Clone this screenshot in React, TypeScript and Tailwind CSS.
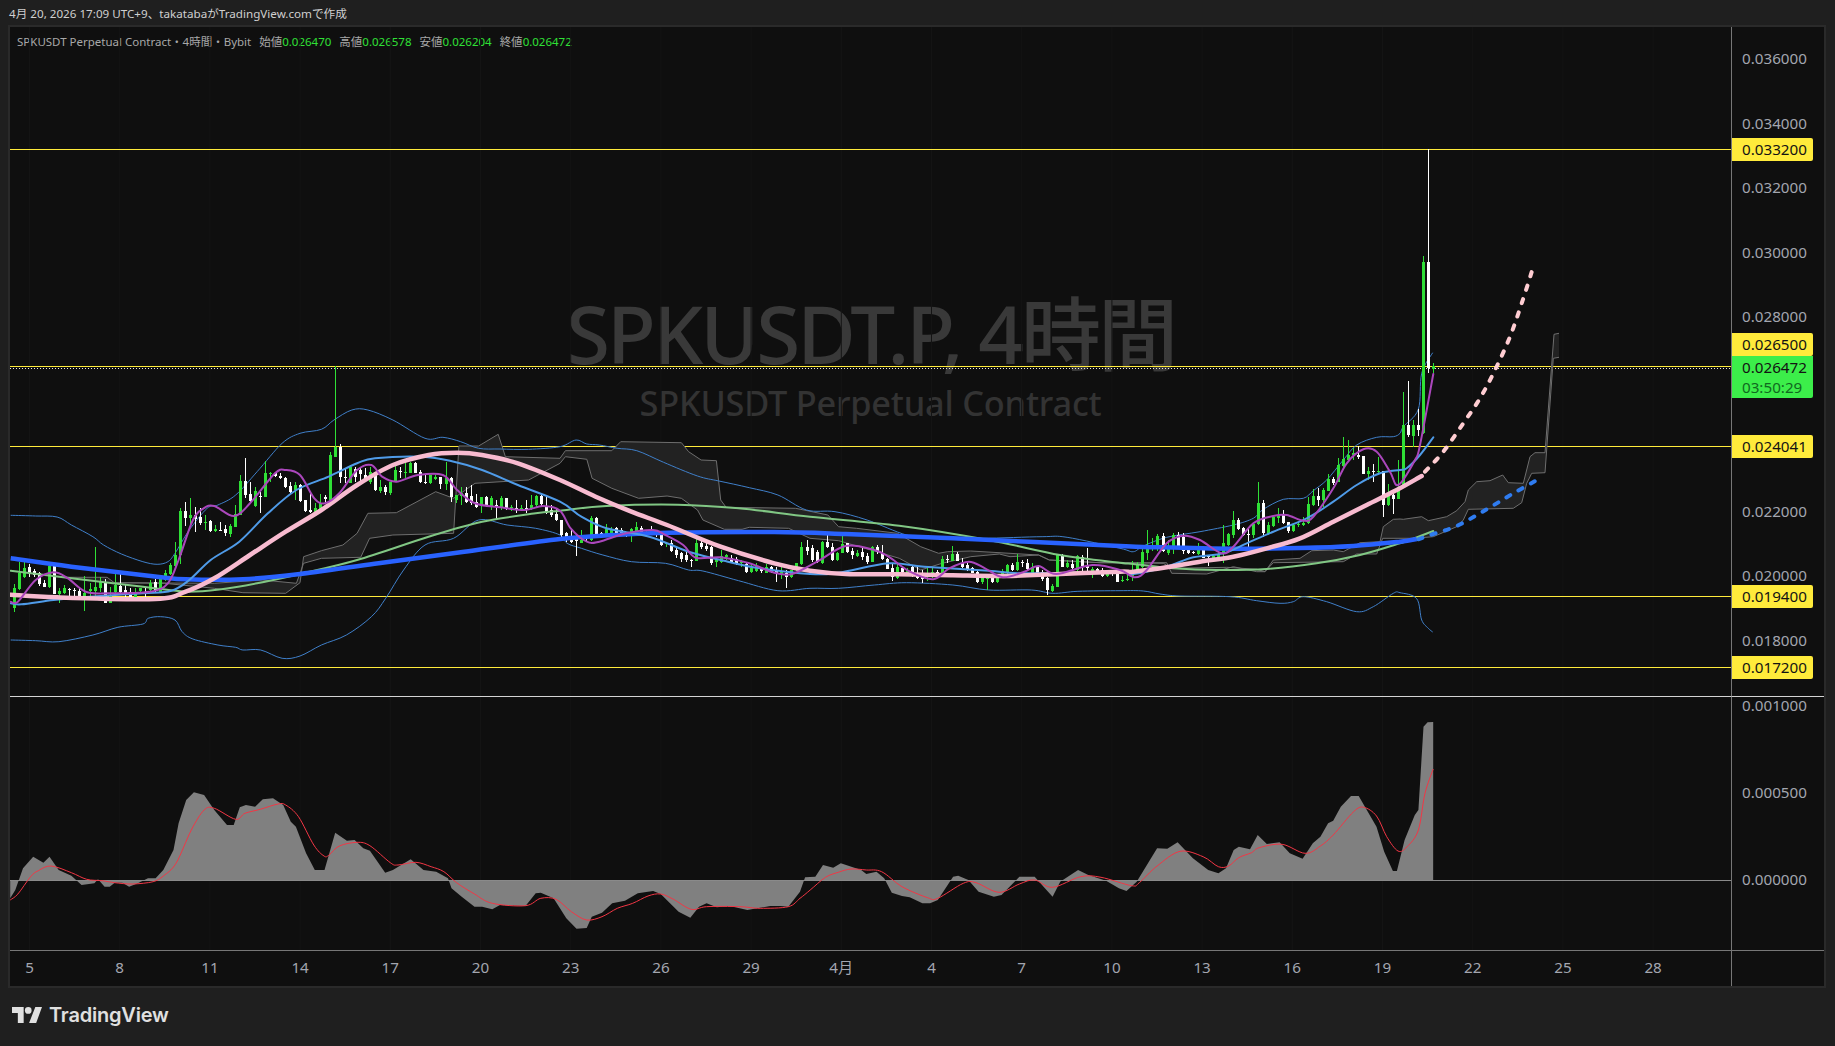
type Pt = [number, number]

const conv = (ox: number, sx: number, oy: number) => (flat: number[]): Pt[] => {
  const out: Pt[] = []
  for (let i = 0; i < flat.length; i += 2) out.push([ox + flat[i] / sx, oy + flat[i + 1] / 3])
  return out
}
const z4 = conv(0, 2.8, 420)
const z6 = conv(560, 2.8, 420)
const z9 = conv(1100, 3, 420)
const z5 = conv(1300, 3, 140)
const z7 = conv(0, 1.96, 690)
const z8 = conv(800, 1.96, 690)

// pieces overlap in x, keep only what moves right of the previous piece
const join = (...parts: Pt[][]): Pt[] => {
  const out: Pt[] = []
  parts.forEach((part) =>
    part.forEach((p) => {
      if (!out.length || p[0] > out[out.length - 1][0] + 0.3) out.push(p)
    }),
  )
  return out
}

const straight = (pts: Pt[]) => pts.map((p, i) => `${i ? 'L' : 'M'}${p[0].toFixed(1)} ${p[1].toFixed(1)}`).join('')

const smooth = (pts: Pt[]) => {
  let d = `M${pts[0][0].toFixed(1)} ${pts[0][1].toFixed(1)}`
  for (let i = 0; i < pts.length - 1; i++) {
    const a = pts[Math.max(i - 1, 0)]
    const b = pts[i]
    const c = pts[i + 1]
    const e = pts[Math.min(i + 2, pts.length - 1)]
    const c1x = b[0] + (c[0] - a[0]) / 6
    const c1y = b[1] + (c[1] - a[1]) / 6
    const c2x = c[0] - (e[0] - b[0]) / 6
    const c2y = c[1] - (e[1] - b[1]) / 6
    d += `C${c1x.toFixed(1)} ${c1y.toFixed(1)} ${c2x.toFixed(1)} ${c2y.toFixed(1)} ${c[0].toFixed(1)} ${c[1].toFixed(1)}`
  }
  return d
}

const bbUpper = join(
  z4([30,286,100,288,160,291,200,315,260,350,290,375,340,402,400,425,440,433,470,425,490,400,530,330,580,265,610,255,660,225,720,155,790,70,840,40,900,28,935,0,985,-30,1030,-30,1100,0,1190,55,1240,52,1290,65,1340,85,1400,87,1480,88,1568,80]),
  z6([0,78,45,60,75,72,110,75,160,85,215,92,290,127,385,168,445,183,530,203,610,225,690,270,770,275,860,300,970,345,1040,352,1180,355,1350,350,1420,352,1568,385]),
  z9([100,395,130,378,200,352,300,335,400,315,460,295,490,268,550,238,610,235,640,212,680,180,730,120,770,75,830,52,880,50,900,40]),
  z5([175,915,235,890,290,888,310,860,355,808,365,700,398,638]),
)
const bbLower = join(
  z4([30,660,100,662,165,665,260,645,330,622,400,612,415,595,450,590,490,600,510,635,540,657,610,675,660,682,680,690,730,690,790,715,840,708,900,675,970,645,1040,590,1080,535,1130,450,1190,375,1270,355,1340,300,1420,315,1500,325,1568,345]),
  z6([20,370,60,385,120,405,200,425,295,430,360,450,400,453,500,482,610,512,700,505,780,505,880,495,970,488,1100,495,1200,510,1320,510,1380,520,1450,514,1568,512]),
  z9([130,513,180,522,240,528,390,530,470,542,540,550,580,545,610,530,680,545,770,575,820,560,880,520,900,518]),
  z5([210,1395,290,1358,350,1376,365,1440,385,1465,398,1476]),
)
const maBlue = join(
  z4([30,415,200,440,440,470,520,478,680,478,840,462,1060,430,1300,395,1568,357]),
  z6([150,345,300,338,600,336,800,342,1100,355,1568,378]),
  z9([180,382,400,386,600,384,760,378,900,365]),
  z5([350,1197]),
)
const blueDash = z5([355,1198,400,1182,470,1158,560,1108,640,1060,720,1015])
const maPink = join(
  z4([30,524,160,532,435,537,520,515,600,475,700,405,800,335,900,270,1000,195,1100,135,1200,105,1280,98,1350,105,1450,130,1568,180]),
  z6([100,230,200,275,300,315,450,380,600,430,700,452,800,462,950,463,1100,466,1250,468,1400,462,1568,455]),
  z9([100,455,200,442,300,425,400,410,500,385,600,355,700,305,800,255,890,210]),
  z5([365,1008]),
)
const pinkDash = z5([375,995,430,935,490,850,540,775,585,690,630,590,665,490,700,380])
const maGreen = join(
  z4([30,452,200,475,400,500,520,515,620,508,720,490,840,462,1000,420,1200,350,1350,305,1500,280,1568,272]),
  z6([130,258,330,254,500,265,700,290,950,317,1200,360,1400,405,1568,428]),
  z9([100,432,220,445,350,450,500,447,650,430,780,405,900,370]),
  z5([330,1200,400,1173]),
)
const maLight = join(
  z4([30,550,60,553,150,540,250,530,400,520,480,512,530,480,590,420,670,365,750,280,830,210,920,170,1000,130,1050,115,1180,110,1260,122,1350,150,1450,195,1568,245]),
  z6([60,290,130,325,250,350,360,395,470,425,560,445,700,462,780,458,920,430,1020,440,1200,452,1300,460,1568,455]),
  z9([100,462,200,440,280,412,370,400,440,370,520,335,620,295,700,245,770,195,840,160,900,150]),
  z5([320,985,360,945,400,892]),
)
const maPurple = join(
  z4([30,545,50,545,100,480,150,457,190,475,240,515,300,520,420,515,470,490,500,420,540,300,570,265,600,258,655,288,700,250,770,160,800,150,840,165,880,235,910,250,950,220,1000,150,1040,135,1070,170,1110,185,1170,165,1240,165,1280,210,1330,250,1400,262,1470,270,1520,258,1568,272]),
  z6([30,325,75,365,110,365,185,340,260,330,295,345,345,375,380,413,450,412,530,430,600,458,650,462,720,425,800,378,880,390,920,410,980,455,1045,478,1090,445,1145,425,1190,445,1240,472,1300,455,1340,438,1390,462,1490,435,1568,450]),
  z9([105,472,140,450,200,370,250,347,300,360,365,400,400,380,460,310,520,288,560,285,610,302,640,290,700,205,740,130,790,88,830,95,870,155,895,195]),
  z5([345,960,360,915,400,702]),
)
const cloudA = join(
  z4([180,472,300,472,320,488,600,490,735,480,830,490,850,430,900,415,1010,412,1035,355,1100,345,1270,340,1285,78,1340,78,1395,43,1415,110,1568,115]),
  z6([15,92,145,92,170,65,340,68,360,95,395,120,438,122,450,240,465,262,660,265,750,285,780,320,830,325,945,340,1010,380,1060,400,1085,395,1150,393,1340,405,1370,420,1512,428]),
  z9([190,430,215,445,380,442,470,448,495,455,520,428,730,425,770,402,830,402,848,355,900,355]),
  z5([340,1195,400,1190,470,1160,490,1140,505,1108,640,1105,665,1088,680,1030,695,1000,735,998,760,655,777,652]),
)
const cloudB = join(
  z4([320,488,460,490,600,505,680,518,800,520,840,488,850,410,900,392,960,375,1000,340,1030,280,1110,278,1220,215,1270,235,1330,190,1480,180,1568,130]),
  z6([15,110,75,118,90,175,145,205,220,235,300,228,340,235,385,270,400,300,460,328,510,328,530,322,640,325,700,355,780,362,950,415,1010,450,1070,430,1150,410,1230,402,1260,410,1340,405,1370,420,1512,428]),
  z9([200,428,215,460,320,462,400,440,470,455,495,455,520,420,600,415,635,392,700,390,730,395,780,368,840,365,850,320,880,298,900,297]),
  z5([310,1138,365,1130,385,1142,440,1130,470,1112,495,1085,505,1050,530,1025,570,1022,608,1005,625,1028,670,1030,690,950,705,938,735,938,762,583,777,580]),
)
const hist = join(
  z7([20,625,30,600,45,535,65,500,85,518,97,500,115,540,140,557,160,585,185,580,192,568,205,590,215,590,225,578,240,578,253,590,270,580,290,565,305,565,320,540,340,480,350,400,365,330,380,307,400,315,420,360,445,405,458,405,470,352,482,345,500,350,515,328,535,325,555,345,570,395,580,410,600,490,617,540,636,540,657,428,680,452,695,450,712,475,725,482,755,548,770,540,805,508,830,540,855,545,878,565,885,595,905,620,930,650,945,650,965,658,980,645,1030,648,1050,610,1060,608,1085,625,1110,685,1130,716,1150,714,1160,680,1180,668,1200,640,1225,632,1250,610,1280,603,1295,612,1330,665,1353,683,1370,650,1385,640,1405,652,1430,648,1465,660,1510,648,1530,648,1545,650,1568,605]),
  z8([10,562,30,560,45,525,65,533,80,520,120,540,130,552,150,545,165,565,180,608,200,618,215,622,240,640,255,640,270,630,300,560,310,557,330,570,350,605,380,620,395,615,430,560,460,560,480,595,495,620,510,575,545,540,565,555,600,572,625,595,640,603,660,575,680,525,700,475,720,476,740,457,770,505,800,540,820,550,835,535,850,480,860,470,882,478,897,435,915,462,940,457,960,490,985,506,1005,460,1020,440,1035,400,1045,392,1060,350,1080,318,1095,318,1130,410,1145,485,1162,543,1170,543,1185,450,1205,375,1212,360,1222,110,1230,97,1241,96]),
)
const signal = join(
  z7([20,630,35,612,60,560,75,542,100,528,140,548,170,568,200,572,225,578,260,582,300,575,320,558,345,520,375,420,400,360,420,355,462,388,480,370,510,358,545,342,560,345,585,380,615,465,635,498,645,495,665,468,700,457,725,467,765,518,780,525,815,517,845,530,870,545,895,578,930,612,965,640,1030,647,1060,625,1090,628,1120,665,1150,690,1180,680,1210,655,1240,640,1270,618,1295,612,1320,628,1355,658,1385,650,1450,650,1490,655,1545,650,1568,625]),
  z8([20,600,50,562,75,547,100,537,130,540,160,545,200,590,250,623,270,625,320,580,345,578,390,607,430,582,460,570,495,592,550,560,590,562,650,587,665,578,700,528,745,484,790,500,820,530,840,528,860,503,885,488,900,473,945,463,990,490,1020,468,1045,435,1085,365,1105,352,1130,378,1150,440,1172,483,1190,470,1212,420,1225,310,1241,237]),
)

// 1 = green, 0 = white; high, body top, body bottom, low as 420 + n / 3
const candles: number[][] = [
  [1,492,505,565,575],[1,425,460,507,510],[1,420,443,470,475],[0,432,441,458,470],[0,448,454,466,472],[0,455,460,492,498],[0,480,490,500,502],[1,435,438,500,505],[0,438,438,522,522],[1,505,514,522,548],
  [1,495,505,518,522],[0,505,508,510,528],[0,505,510,512,528],[0,505,512,532,540],[1,468,518,535,572],[1,490,507,514,540],[1,380,502,512,540],[1,470,485,505,515],[0,478,490,548,550],[1,500,525,548,550],
  [1,453,495,515,525],[0,463,497,515,520],[0,495,510,520,530],[0,505,515,538,540],[1,505,518,538,538],[1,505,505,512,520],[0,505,515,520,535],[1,480,488,510,520],[0,478,485,512,520],[1,465,478,518,520],
  [1,450,458,480,482],[1,430,434,462,465],[1,365,405,438,440],[1,265,272,405,432],[0,245,272,295,318],[1,235,285,295,320],[0,262,285,298,335],[0,265,292,310,315],[1,285,305,308,330],[0,300,302,332,335],
  [1,315,328,332,335],[0,305,330,331,332],[0,315,328,340,348],[1,312,318,342,350],[1,255,283,320,322],[1,165,183,285,285],[0,113,183,225,235],[0,185,222,242,245],[1,200,213,258,260],[0,215,228,230,278],
  [1,123,160,230,232],[1,155,158,160,185],[0,155,158,168,172],[0,160,168,175,178],[0,172,175,200,205],[0,185,198,215,222],[1,185,195,210,240],[0,192,195,243,245],[0,240,240,272,275],[0,220,270,275,280],
  [1,250,265,275,288],[1,222,248,272,272],[0,225,232,236,245],[1,95,105,240,242],[1,-162,82,110,112],[0,72,80,170,190],[0,143,170,172,188],[1,138,142,190,190],[0,140,148,172,185],[0,145,150,162,185],
  [0,145,165,182,185],[1,140,155,185,192],[0,155,155,210,212],[1,180,202,212,218],[0,195,202,216,225],[1,185,187,218,225],[1,130,150,185,187],[0,140,153,155,175],[1,130,155,157,175],[1,125,130,158,160],
  [0,125,130,158,160],[0,150,155,187,190],[0,165,185,188,192],[1,165,165,190,192],[1,165,170,178,180],[0,170,172,192,208],[1,125,175,192,210],[0,170,175,232,245],[1,225,225,240,250],[1,200,218,228,255],
  [0,200,220,245,250],[0,195,228,248,255],[0,222,245,260,265],[1,230,232,258,278],[0,228,230,255,260],[1,228,235,258,270],[0,240,255,260,298],[1,228,235,262,270],[0,235,235,268,270],[1,255,262,265,272],
  [0,240,265,270,280],[1,255,265,270,272],[0,240,265,270,278],[1,225,255,268,270],[1,225,228,255,260],[0,222,228,252,258],[0,230,258,278,282],[0,255,270,285,290],[0,265,282,300,302],[0,300,300,345,350],
  [0,335,340,356,365],[0,330,350,365,370],[0,345,352,362,408],[1,330,360,368,370],[0,345,350,358,365],[1,288,295,360,362],[0,292,295,342,345],[0,335,340,350,352],[1,312,328,348,350],[1,322,326,345,348],
  [0,322,325,340,345],[0,325,330,340,345],[0,335,342,348,350],[1,325,328,345,365],[1,305,322,332,335],[0,318,325,338,340],[1,330,335,340,352],[0,318,332,338,340],[0,330,335,345,350],[0,335,342,375,378],
  [1,365,368,372,382],[0,360,368,392,395],[0,385,390,405,415],[0,395,400,418,425],[0,395,405,420,425],[0,418,420,423,440],[1,358,368,422,424],[0,360,368,382,388],[0,370,378,388,392],[0,378,382,428,435],
  [1,415,418,425,442],[1,390,408,425,428],[1,402,405,412,420],[0,405,415,425,428],[0,412,418,428,435],[1,420,424,430,440],[0,425,432,455,458],[1,435,445,455,458],[1,428,438,452,455],[0,440,445,452,458],
  [1,432,440,458,460],[0,438,440,455,458],[0,440,450,462,485],[1,442,455,465,478],[0,450,458,472,503],[1,450,450,472,475],[1,428,430,450,452],[1,365,380,432,434],[0,360,380,392,405],[0,375,385,420,425],
  [0,390,395,425,430],[1,362,365,430,432],[0,345,365,382,385],[0,370,380,420,422],[1,395,398,420,422],[1,348,372,398,400],[0,368,370,396,400],[0,385,392,405,418],[1,390,398,408,412],[0,385,395,412,420],
  [0,400,408,425,432],[1,378,380,425,427],[0,375,380,395,402],[0,375,400,418,420],[0,415,416,446,448],[0,432,445,472,483],[1,432,442,474,476],[0,438,445,455,458],[1,445,450,460,462],[0,435,442,455,470],
  [0,440,460,474,476],[0,450,470,478,488],[1,445,458,472,484],[1,445,455,472,474],[0,450,456,460,475],[1,408,418,462,465],[0,405,418,420,430],[1,378,402,422,424],[0,395,402,422,424],[0,415,430,442,445],
  [0,430,436,450,452],[0,440,445,458,460],[0,450,455,486,488],[1,462,473,486,492],[1,465,468,478,510],[0,463,466,486,488],[1,470,474,486,490],[1,448,452,470,472],[1,432,435,458,462],[0,428,434,450,452],
  [1,403,425,450,452],[0,420,425,428,442],[0,418,428,448,452],[1,428,440,458,460],[0,440,442,462,466],[0,450,456,478,482],[0,470,474,510,525],[1,492,498,512,515],[1,402,405,500,502],[0,402,405,440,442],
  [1,420,430,442,445],[0,420,432,445,448],[1,405,408,450,452],[0,405,410,438,458],[0,385,438,445,458],[1,440,448,458,475],[0,445,448,452,460],[0,445,450,468,470],[1,450,452,468,470],[0,450,452,462,468],
  [0,455,460,485,487],[1,468,480,482,486],[1,462,476,478,482],[1,424,450,468,482],[1,425,435,453,455],[1,375,396,442,445],[1,330,384,398,420],[1,355,380,385,392],[1,342,348,388,392],[0,340,348,392,395],
  [1,360,382,398,405],[1,338,346,385,402],[0,335,345,378,378],[0,340,352,392,402],[0,383,390,398,402],[0,392,395,398,402],[1,370,384,402,404],[0,384,384,413,415],[0,405,408,410,438],[1,405,408,415,418],
  [1,395,402,412,418],[1,316,370,398,428],[1,340,342,375,378],[1,274,300,345,354],[0,295,300,326,330],[0,320,323,345,348],[0,325,342,345,384],[1,310,312,345,355],[1,186,250,312,315],[0,240,250,340,352],
  [1,305,316,342,345],[1,285,292,318,320],[1,265,285,295,310],[0,270,285,310,312],[0,305,306,332,338],[1,312,316,332,335],[1,306,312,316,320],[1,292,308,314,318],[1,232,252,310,312],[1,208,228,256,258],
  [0,205,228,240,258],[1,205,210,240,260],[1,162,176,212,214],[0,170,176,190,195],[1,115,136,185,186],[1,52,118,138,140],[1,60,105,120,125],[1,85,100,105,120],[0,78,104,110,118],[0,108,108,162,162],
  [1,140,154,162,180],[0,132,154,156,185],[1,110,154,156,165],[0,153,153,255,290],[1,192,224,255,258],[0,222,225,236,282],[1,120,200,236,238],[1,-85,15,200,202],[0,-118,15,45,50],[1,0,15,48,80],
  [0,-32,15,30,48],[1,-492,-475,40,42],[0,-812,-475,-155,-140],[1,-170,-162,-154,-140],
]

const priceTicks = [
  ['0.036000', 58.5], ['0.034000', 123.5], ['0.032000', 188], ['0.030000', 252.5], ['0.028000', 317],
  ['0.022000', 511.5], ['0.020000', 576], ['0.018000', 641],
] as const
const priceTags = [
  ['0.033200', 149.5], ['0.026500', 344.5], ['0.024041', 446.5], ['0.019400', 596.5], ['0.017200', 667],
] as const
const yellowLines = [149.5, 366.5, 446.5, 596.5, 667.5]
const oscTicks = [['0.001000', 705.7], ['0.000500', 792.7], ['0.000000', 880]] as const
const dates = ['5', '8', '11', '14', '17', '20', '23', '26', '29', '4月', '4', '7', '10', '13', '16', '19', '22', '25', '28']

const PANE_W = 1721

const App = () => {
  return (
    <div className="flex h-[1046px] w-[1835px] flex-col overflow-hidden bg-[#1f1f1f] font-['Noto_Sans','Noto_Sans_CJK_JP',sans-serif]">
      <div className="flex h-[27px] shrink-0 items-center pl-[9px] text-[11.65px] text-[#cfcfcf]">
        4月 20, 2026 17:09 UTC+9、takatabaがTradingView.comで作成
      </div>

      <div className="ml-[10px] grid w-[1814px] shrink-0 grid-cols-[1721px_93px] grid-rows-[669px_254px_36px] bg-[#0f0f0f] ring-2 ring-[#2a2a2a]">
        <div className="relative overflow-hidden">
          <div className="absolute left-[7px] top-[6px] flex gap-[8px] text-[11.5px] text-[#a8a8a8]">
            <span>SPKUSDT Perpetual Contract・4時間・Bybit</span>
            <span>始値<span className="text-[#2fe036]">0.026470</span></span>
            <span>高値<span className="text-[#2fe036]">0.026578</span></span>
            <span>安値<span className="text-[#2fe036]">0.026204</span></span>
            <span>終値<span className="text-[#2fe036]">0.026472</span></span>
          </div>
          <div className="absolute left-0 top-[266px] flex w-full flex-col items-center text-[#393939]">
            <div className="text-[80px] font-medium leading-[80px] tracking-[-3px]">SPKUSDT.P, 4時間</div>
            <div className="mt-[7px] text-[34.3px] font-medium leading-[46px] tracking-[-0.2px] text-[#333333]">SPKUSDT Perpetual Contract</div>
          </div>
          <svg className="absolute inset-0" width={PANE_W} height={669} viewBox="10 27 1721 669" fill="none">
            <g stroke="#141414">
              {dates.map((_, i) => (
                <line key={i} x1={29.5 + i * 90.2} x2={29.5 + i * 90.2} y1={27} y2={696} />
              ))}
            </g>
            {yellowLines.map((y) => (
              <line key={y} x1={10} x2={1731} y1={y} y2={y} stroke="#ffeb3b" />
            ))}
            <line x1={10} x2={1731} y1={368.5} y2={368.5} stroke="#e8e8e8" strokeDasharray="1 2" />

            <path d={`${straight(cloudA)}${straight([...cloudB].reverse()).replace('M', 'L')}Z`} fill="#222222" fillRule="evenodd" />
            <path d={straight(cloudA)} stroke="#6e6e6e" />
            <path d={straight(cloudB)} stroke="#6e6e6e" />

            <path d={smooth(bbUpper)} stroke="#3f7fc9" />
            <path d={smooth(bbLower)} stroke="#3f7fc9" />

            <g shapeRendering="crispEdges">
              {candles.map(([green, high, top, bottom, low], i) => {
                const x = Math.round(14.3 + i * 5.014)
                const color = green ? '#2fe036' : '#ffffff'
                return (
                  <g key={i} fill={color}>
                    <rect x={x} y={420 + high / 3} width={1} height={(low - high) / 3} />
                    <rect x={x - 1} y={420 + top / 3} width={3} height={Math.max((bottom - top) / 3, 1)} />
                  </g>
                )
              })}
            </g>

            <g strokeLinejoin="round" strokeLinecap="round">
              <path d={smooth(maGreen)} stroke="#81c784" strokeWidth={2} />
              <path d={smooth(maBlue)} stroke="#2962ff" strokeWidth={4.5} strokeLinecap="butt" />
              <path d={smooth(maLight)} stroke="#4f9be8" strokeWidth={2} />
              <path d={smooth(maPink)} stroke="#f8bbd0" strokeWidth={4.5} />
              <path d={smooth(maPurple)} stroke="#ab47bc" strokeWidth={2} />
              <path d={smooth(pinkDash)} stroke="#ffcdd2" strokeWidth={4} strokeDasharray="4.5 9.5" />
              <path d={smooth(blueDash)} stroke="#2f7cf0" strokeWidth={4} strokeDasharray="4.5 9.5" />
            </g>
          </svg>
        </div>

        <div className="relative border-l border-[#777777] text-[15.2px] leading-[22px] text-[#a3a6af]">
          {priceTicks.map(([label, y]) => (
            <div key={label} className="absolute left-[10px]" style={{ top: y - 27 - 12 }}>
              {label}
            </div>
          ))}
          {priceTags.map(([label, y]) => (
            <div
              key={label}
              className="absolute left-0 h-[23px] w-[81px] rounded-r-[2px] bg-[#ffeb3b] pl-[10px] leading-[23px] text-[#131313]"
              style={{ top: y - 27 - 11.5 }}
            >
              {label}
            </div>
          ))}
          <div className="absolute left-0 top-[329px] flex h-[42px] w-[81px] flex-col justify-center rounded-br-[2px] bg-[#3cee4a] pl-[10px] leading-[20px]">
            <span className="text-[#131313]">0.026472</span>
            <span className="text-[#10691f]">03:50:29</span>
          </div>
        </div>

        <div className="relative overflow-hidden border-t border-[#d4d4d4]">
          <svg className="absolute left-0 top-[-1px]" width={PANE_W} height={255} viewBox="10 696 1721 255" fill="none">
            <g stroke="#141414">
              {dates.map((_, i) => (
                <line key={i} x1={29.5 + i * 90.2} x2={29.5 + i * 90.2} y1={696} y2={950} />
              ))}
            </g>
            <path d={`M${hist[0][0]} 880${straight(hist).replace('M', 'L')}L${hist[hist.length - 1][0]} 880Z`} fill="#808080" />
            <line x1={10} x2={1731} y1={880.5} y2={880.5} stroke="#8a8a8a" />
            <path d={smooth(signal)} stroke="#f23645" strokeLinejoin="round" />
          </svg>
        </div>

        <div className="relative border-l border-t border-l-[#777777] border-t-[#d4d4d4] text-[15.2px] leading-[22px] text-[#a3a6af]">
          {oscTicks.map(([label, y]) => (
            <div key={label} className="absolute left-[10px]" style={{ top: y - 696 - 13 }}>
              {label}
            </div>
          ))}
        </div>

        <div className="relative border-t border-[#777777] text-[15.2px] leading-[22px] text-[#a3a6af]">
          {dates.map((label, i) => (
            <span key={i} className="absolute top-[5px] -translate-x-1/2" style={{ left: 19.5 + i * 90.2 }}>
              {label}
            </span>
          ))}
        </div>
        <div className="border-l border-t border-[#777777]" />
      </div>

      <div className="flex flex-1 items-center gap-[7px] pb-[3px] pl-[12px] text-[#e0e0e0]">
        <svg width={30} height={16} viewBox="0 0 36 19" fill="currentColor">
          <path d="M14 19H7V7H0V0h14v19zM29 19h-8.5L28 0h8l-7 19z" />
          <circle cx={19.5} cy={4} r={4} />
        </svg>
        <span className="font-['Inter',sans-serif] text-[20px] font-semibold tracking-[-0.2px]">TradingView</span>
      </div>
    </div>
  )
}

export default App
